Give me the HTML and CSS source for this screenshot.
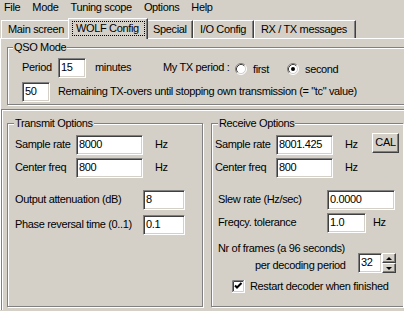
FILE: index.html
```html
<!DOCTYPE html>
<html lang="en">
<head>
    <meta charset="UTF-8">
    <meta name="viewport" content="width=device-width, initial-scale=1.0">
    <title>WOLF Config</title>
    <link rel="stylesheet" href="styles.css">
</head>
<body>

    <div class="menubar">
        <span>File</span>
        <span>Mode</span>
        <span>Tuning scope</span>
        <span>Options</span>
        <span>Help</span>
    </div>

    <div class="tabs">
        <div class="tab t-main">Main screen</div>
        <div class="tab t-wolf active"><span class="focus">WOLF Config</span></div>
        <div class="tab t-special">Special</div>
        <div class="tab t-io">I/O Config</div>
        <div class="tab t-rx">RX / TX messages</div>
    </div>

    <div class="page">
        <fieldset class="group qso">
            <legend>QSO Mode</legend>
            <div class="row qso-row1">
                <span class="lbl-period">Period</span>
                <div class="edit w-period">15</div>
                <span class="lbl-minutes">minutes</span>
                <span class="lbl-mytx">My TX period :</span>
                <span class="radio r-first">
                    <svg width="12" height="12" viewBox="0 0 12 12">
                        <circle cx="6" cy="6" r="5" fill="#fff"/>
                        <path d="M2.11 9.89A5.5 5.5 0 0 1 9.89 2.11" fill="none" stroke="#808080"/>
                        <path d="M9.89 2.11A5.5 5.5 0 0 1 2.11 9.89" fill="none" stroke="#fff"/>
                        <path d="M2.82 9.18A4.5 4.5 0 0 1 9.18 2.82" fill="none" stroke="#404040"/>
                        <path d="M9.18 2.82A4.5 4.5 0 0 1 2.82 9.18" fill="none" stroke="#d4d0c8"/>
                    </svg>
                    first
                </span>
                <span class="radio">
                    <svg width="12" height="12" viewBox="0 0 12 12">
                        <circle cx="6" cy="6" r="5" fill="#fff"/>
                        <path d="M2.11 9.89A5.5 5.5 0 0 1 9.89 2.11" fill="none" stroke="#808080"/>
                        <path d="M9.89 2.11A5.5 5.5 0 0 1 2.11 9.89" fill="none" stroke="#fff"/>
                        <path d="M2.82 9.18A4.5 4.5 0 0 1 9.18 2.82" fill="none" stroke="#404040"/>
                        <path d="M9.18 2.82A4.5 4.5 0 0 1 2.82 9.18" fill="none" stroke="#d4d0c8"/>
                        <circle cx="6" cy="6" r="2" fill="#000"/>
                    </svg>
                    second
                </span>
            </div>
            <div class="row qso-row2">
                <div class="edit w-tc">50</div>
                <span class="lbl-tc">Remaining TX-overs until stopping own transmission (= &quot;tc&quot; value)</span>
            </div>
        </fieldset>

        <div class="lower">
            <fieldset class="group tx">
                <legend>Transmit Options</legend>
                <div class="row first-row">
                    <span class="lbl">Sample rate</span>
                    <div class="edit w-rate">8000</div>
                    <span class="unit">Hz</span>
                </div>
                <div class="row next-row">
                    <span class="lbl">Center freq</span>
                    <div class="edit w-rate">800</div>
                    <span class="unit">Hz</span>
                </div>
                <div class="row spaced-row">
                    <span class="lbl-long">Output attenuation (dB)</span>
                    <div class="edit w-short">8</div>
                </div>
                <div class="row phase-row">
                    <span class="lbl-long">Phase reversal time (0..1)</span>
                    <div class="edit w-short">0.1</div>
                </div>
            </fieldset>

            <fieldset class="group rx">
                <legend>Receive Options</legend>
                <div class="row first-row">
                    <span class="lbl">Sample rate</span>
                    <div class="edit w-rrate">8001.425</div>
                    <span class="unit unit-cal">Hz</span>
                    <div class="btn">CAL</div>
                </div>
                <div class="row next-row">
                    <span class="lbl">Center freq</span>
                    <div class="edit w-rrate">800</div>
                    <span class="unit">Hz</span>
                </div>
                <div class="row spaced-row ind">
                    <span class="lbl-slew">Slew rate (Hz/sec)</span>
                    <div class="edit w-slew">0.0000</div>
                </div>
                <div class="row next-row ind">
                    <span class="lbl-slew">Freqcy. tolerance</span>
                    <div class="edit w-tol">1.0</div>
                    <span class="unit unit-tol">Hz</span>
                </div>
                <div class="frames">Nr of frames (a 96 seconds)</div>
                <div class="spin-row">
                    <span class="lbl-perdec">per decoding period</span>
                    <div class="edit w-spin">32</div>
                    <div class="spin">
                        <div class="spin-btn"><i class="arrow-up"></i></div>
                        <div class="spin-btn"><i class="arrow-down"></i></div>
                    </div>
                </div>
                <div class="check-row">
                    <svg width="13" height="13" viewBox="0 0 13 13">
                        <rect x="0" y="0" width="13" height="13" fill="#fff"/>
                        <path d="M0.5 12V0.5H12" fill="none" stroke="#808080"/>
                        <path d="M1.5 11V1.5H11" fill="none" stroke="#404040"/>
                        <path d="M0 12.5H12.5V0" fill="none" stroke="#fff"/>
                        <path d="M1 11.5H11.5V1" fill="none" stroke="#d4d0c8"/>
                        <path d="M3 5.5L5 7.5L9.5 3" fill="none" stroke="#000" stroke-width="2"/>
                    </svg>
                    <span>Restart decoder when finished</span>
                </div>
            </fieldset>
        </div>
    </div>

</body>
</html>
```

FILE: styles.css
```css
* {
    box-sizing: border-box;
}

html,
body {
    margin: 0;
    padding: 0;
}

body {
    width: 404px;
    height: 311px;
    overflow: hidden;
    background: #d4d0c8;
    color: #000;
    font-family: "Liberation Sans", Arial, sans-serif;
    font-size: 11px;
    line-height: 13px;
    letter-spacing: -0.35px;
}

/* menu bar */
.menubar {
    display: flex;
    gap: 12px;
    height: 16px;
    padding: 1px 0 0 4px;
    line-height: 12px;
}

/* tab strip */
.tabs {
    position: relative;
    z-index: 1;
    display: flex;
    align-items: flex-end;
    height: 22px;
    padding-left: 1px;
}

.tab {
    height: 18px;
    padding: 2px 0 0 6px;
    border-top: 1px solid #fff;
    border-left: 1px solid #fff;
    border-right: 1px solid #404040;
    box-shadow: inset -1px 0 0 #808080;
    white-space: nowrap;
}

.t-main { width: 69px; }
.t-special { width: 47px; }
.t-io { width: 61px; }
.t-rx { width: 102px; }

.tab.active {
    position: relative;
    z-index: 2;
    width: 80px;
    height: 21px;
    margin: 0 -2px -1px;
    padding: 2px 0 0 3px;
    background: #d4d0c8;
}

.focus {
    display: inline-block;
    padding: 0 5px 0 3px;
    border: 1px dotted #000;
}

/* tab page */
.page {
    border-top: 1px solid #fff;
    border-left: 1px solid #fff;
}

.group {
    min-width: 0;
    margin: 0;
    padding: 0;
    border: 1px solid #808080;
    box-shadow: 1px 1px 0 #fff, inset 1px 1px 0 #fff;
}

.group legend {
    margin-left: 6px;
    padding: 0 1px;
    background: #d4d0c8;
}

/* groups on the right run off the window edge */
.qso {
    width: 397px;
    margin: 2px 0 0 6px;
    padding-bottom: 2px;
    border-right: 0;
}

.qso legend {
    margin-left: 5px;
}

.row {
    display: flex;
    align-items: baseline;
}

.edit {
    height: 20px;
    padding: 0 2px;
    background: #fff;
    border: 1px solid;
    border-color: #808080 #fff #fff #808080;
    box-shadow: inset 1px 1px 0 #404040, inset -1px -1px 0 #d4d0c8;
    line-height: 16px;
    white-space: nowrap;
}

/* QSO mode */
.qso-row1 {
    margin-top: 4px;
    padding-left: 14px;
}

.lbl-period { width: 36px; }
.w-period { width: 28px; }
.lbl-minutes { width: 68px; margin-left: 9px; }
.lbl-mytx { width: 72px; }

.radio {
    display: flex;
    align-items: center;
    align-self: center;
    gap: 6px;
    margin-top: 2px;
}

.r-first { width: 52px; }

.qso-row2 {
    margin-top: 4px;
    padding-left: 14px;
}

.w-tc { width: 28px; }
.lbl-tc { margin-left: 8px; white-space: nowrap; }

/* lower panel with the two option groups */
.lower {
    display: flex;
    gap: 8px;
    height: 201px;
    margin-top: 4px;
    padding: 7px 0 3px 5px;
    border-top: 1px solid #808080;
    border-left: 1px solid #808080;
    box-shadow: inset 1px 1px 0 #fff;
}

.tx {
    flex: none;
    width: 196px;
}

.rx {
    flex: none;
    width: 192px;
    border-right: 0;
}

.first-row { margin-top: 5px; }
.next-row { margin-top: 3px; }
.spaced-row { margin-top: 12px; }
.phase-row { margin-top: 5px; }

.tx .row { padding-left: 7px; }
.rx .row { padding-left: 3px; }
.rx .row.ind { padding-left: 6px; }

.lbl { width: 61px; }
.lbl-long { width: 128px; }
.lbl-slew { width: 109px; }

.w-rate { width: 67px; }
.w-short { width: 42px; }
.w-rrate { width: 57px; }
.w-slew { width: 68px; }
.w-tol { width: 39px; }
.w-spin { width: 24px; }

.unit { margin-left: 12px; }
.unit-cal { width: 27px; }
.unit-tol { margin-left: 7px; }

.btn {
    align-self: flex-start;
    width: 27px;
    height: 20px;
    margin-top: -2px;
    border: 1px solid;
    border-color: #fff #404040 #404040 #fff;
    box-shadow: inset -1px -1px 0 #808080, inset 1px 1px 0 #d4d0c8;
    text-align: center;
    line-height: 17px;
}

.frames {
    margin-top: 9px;
    padding-left: 6px;
    white-space: nowrap;
}

.spin-row {
    display: flex;
    align-items: flex-end;
    margin-top: -2px;
    padding-left: 43px;
}

.lbl-perdec {
    width: 103px;
    margin-bottom: 1px;
    white-space: nowrap;
}

.spin {
    display: flex;
    flex-direction: column;
}

.spin-btn {
    display: flex;
    align-items: center;
    justify-content: center;
    width: 14px;
    height: 10px;
    border: 1px solid;
    border-color: #fff #404040 #404040 #fff;
    box-shadow: inset -1px -1px 0 #808080;
}

.arrow-up,
.arrow-down {
    width: 0;
    height: 0;
    border-left: 3px solid transparent;
    border-right: 3px solid transparent;
}

.arrow-up { border-bottom: 3px solid #000; }
.arrow-down { border-top: 3px solid #000; }

.check-row {
    display: flex;
    align-items: center;
    gap: 5px;
    margin-top: 7px;
    padding-left: 20px;
    white-space: nowrap;
}
```
